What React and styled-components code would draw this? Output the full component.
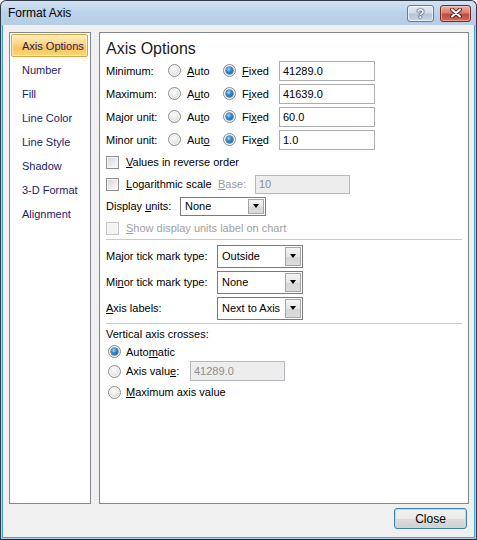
import styled, { createGlobalStyle } from "styled-components"

const GlobalStyle = createGlobalStyle`
  html, body {
    margin: 0;
    padding: 0;
    background: #ffffff;
  }
  * {
    box-sizing: border-box;
  }
`

const navItems = ["Axis Options", "Number", "Fill", "Line Color", "Line Style", "Shadow", "3-D Format", "Alignment"]

const bounds = [
  { label: "Minimum:", auto: ["", "A", "uto"], fixed: ["", "F", "ixed"], value: "41289.0" },
  { label: "Maximum:", auto: ["A", "u", "to"], fixed: ["F", "i", "xed"], value: "41639.0" },
  { label: "Major unit:", auto: ["Au", "t", "o"], fixed: ["Fi", "x", "ed"], value: "60.0" },
  { label: "Minor unit:", auto: ["Aut", "o", ""], fixed: ["Fix", "e", "d"], value: "1.0" },
]

// text with one underlined access key: [before, key, after]
function Key ({parts}) {
  return <>{parts[0]}<u>{parts[1]}</u>{parts[2]}</>
}

function CloseGlyph () {
  return (
    <svg width="12" height="10" viewBox="0 0 12 10">
      <path d="M2 1.5 L10 8.5 M10 1.5 L2 8.5" stroke="#5a1a12" strokeWidth="4" strokeLinecap="round" />
      <path d="M2 1.5 L10 8.5 M10 1.5 L2 8.5" stroke="#ffffff" strokeWidth="2.2" strokeLinecap="round" />
    </svg>
  )
}

function Combo ({value, top}) {
  return (
    <ComboBox $tall={top}>
      <ComboText>{value}</ComboText>
      <ComboButton><Arrow /></ComboButton>
    </ComboBox>
  )
}

export default function App () {
  return (
    <>
      <GlobalStyle />
      <Window>
        <TitleBar>
          <TitleText>Format Axis</TitleText>
          <CaptionButtons>
            <HelpButton>?</HelpButton>
            <CloseCaption><CloseGlyph /></CloseCaption>
          </CaptionButtons>
        </TitleBar>
        <Body>
          <Panels>
            <NavPanel>
              {navItems.map((item, i) => (
                <NavItem key={item} $active={i === 0}>{item}</NavItem>
              ))}
            </NavPanel>
            <OptionsPanel>
              <Heading>Axis Options</Heading>
              {bounds.map(b => (
                <BoundRow key={b.label}>
                  <Label>{b.label}</Label>
                  <Choice><Radio /><span><Key parts={b.auto} /></span></Choice>
                  <Choice><Radio $checked /><span><Key parts={b.fixed} /></span></Choice>
                  <TextBox>{b.value}</TextBox>
                </BoundRow>
              ))}
              <CheckRow>
                <Checkbox /><span><u>V</u>alues in reverse order</span>
              </CheckRow>
              <CheckRow>
                <Checkbox /><FixedText $width={85}><u>L</u>ogarithmic scale</FixedText>
                <BaseLabel><u>B</u>ase:</BaseLabel>
                <TextBox $disabled $width={95} $height={19}>10</TextBox>
              </CheckRow>
              <CheckRow>
                <FixedText $width={67}>Display <u>u</u>nits:</FixedText>
                <Combo value="None" />
              </CheckRow>
              <CheckRow $disabled>
                <Checkbox $disabled /><span><u>S</u>how display units label on chart</span>
              </CheckRow>
              <Separator />
              <TickRow>
                <TickLabel>Ma<u>j</u>or tick mark type:</TickLabel>
                <Combo value="Outside" top />
              </TickRow>
              <TickRow>
                <TickLabel>Mi<u>n</u>or tick mark type:</TickLabel>
                <Combo value="None" top />
              </TickRow>
              <TickRow>
                <TickLabel><u>A</u>xis labels:</TickLabel>
                <Combo value="Next to Axis" top />
              </TickRow>
              <Separator $gap={2} $after={2} />
              <CrossTitle>Vertical axis crosses:</CrossTitle>
              <CrossRow $height={17}>
                <Radio $checked /><span>Auto<u>m</u>atic</span>
              </CrossRow>
              <CrossRow $height={22}>
                <Radio /><FixedText $width={59}>Axis valu<u>e</u>:</FixedText>
                <TextBox $disabled $width={95} $height={20}>41289.0</TextBox>
              </CrossRow>
              <CrossRow $height={20}>
                <Radio /><span><u>M</u>aximum axis value</span>
              </CrossRow>
            </OptionsPanel>
          </Panels>
          <Footer>
            <DialogButton>Close</DialogButton>
          </Footer>
        </Body>
      </Window>
    </>
  )
}

const Window = styled.div`
  width: 477px;
  height: 540px;
  border: 1px solid #2e3b48;
  border-bottom-color: #1d2630;
  border-radius: 6px 6px 0 0;
  background: linear-gradient(#d3e2f3 0px, #bcd2ea 12px, #b6cde7 24px, #b9d0e9 540px);
  display: flex;
  flex-direction: column;
  padding: 0 1px 1px;
  font-family: "Liberation Sans", Arial, sans-serif;
  font-size: 11px;
  color: #000000;
  overflow: hidden;
`

const TitleBar = styled.div`
  height: 24px;
  display: flex;
  align-items: center;
  justify-content: space-between;
  padding: 0 4px 0 6px;
`

const TitleText = styled.div`
  font-size: 12px;
  color: #000000;
`

const CaptionButtons = styled.div`
  display: flex;
  gap: 6px;
  align-items: center;
`

const HelpButton = styled.div`
  width: 27px;
  height: 17px;
  border: 1px solid #6a7b90;
  border-radius: 3px;
  background: linear-gradient(#e4ecf6 0%, #cfdcec 45%, #b4c6dc 55%, #c6d6ea 100%);
  box-shadow: inset 0 0 0 1px rgba(255, 255, 255, 0.6);
  color: #ffffff;
  font-weight: bold;
  font-size: 13px;
  line-height: 15px;
  text-align: center;
  text-shadow: 0 0 1px #2c3a4c, 0 0 1px #2c3a4c, 0 0 2px #2c3a4c;
`

const CloseCaption = styled.div`
  width: 31px;
  height: 17px;
  border: 1px solid #6e2a22;
  border-radius: 3px;
  background: linear-gradient(#eab1a6 0%, #d97f71 45%, #c4493a 55%, #d26a58 100%);
  box-shadow: inset 0 0 0 1px rgba(255, 220, 210, 0.5);
  display: flex;
  align-items: center;
  justify-content: center;
`

const Body = styled.div`
  flex: 1;
  background: #f0f0f0;
  border: 1px solid #3aa5dc;
  border-top: none;
  padding: 7px 5px 0 6px;
  display: flex;
  flex-direction: column;
`

const Panels = styled.div`
  display: flex;
  gap: 8px;
  height: 472px;
`

const NavPanel = styled.div`
  width: 82px;
  background: #ffffff;
  border: 1px solid #828790;
  padding: 1px 2px 0 1px;
  display: flex;
  flex-direction: column;
`

const NavItem = styled.div`
  line-height: 22px;
  padding-left: 10px;
  color: #1c1c6c;
  white-space: nowrap;
  border: 1px solid ${p => p.$active ? "#d9a33e" : "transparent"};
  border-radius: 2px;
  background: ${p => p.$active
    ? "linear-gradient(#fff0c4 0%, #fedb8a 35%, #fcc55a 60%, #fbd67a 100%)"
    : "transparent"};
  box-shadow: ${p => p.$active ? "inset 0 0 0 1px rgba(255, 245, 210, 0.7)" : "none"};
  height: ${p => p.$active ? "23px" : "24px"};
  margin-bottom: ${p => p.$active ? "1px" : "0"};
`

const OptionsPanel = styled.div`
  width: 370px;
  background: #ffffff;
  border: 1px solid #828790;
  padding: 6px 6px 0 6px;
  display: flex;
  flex-direction: column;
`

const Heading = styled.div`
  font-size: 16px;
  line-height: 20px;
  height: 20px;
  color: #1a1a1a;
`

const BoundRow = styled.div`
  display: grid;
  grid-template-columns: 62px 55px 56px 96px;
  align-items: center;
  height: 23px;
`

const Label = styled.div`
  white-space: nowrap;
`

const Choice = styled.div`
  display: flex;
  align-items: center;
  gap: 6px;
`

const Radio = styled.span`
  flex: none;
  position: relative;
  width: 13px;
  height: 13px;
  border-radius: 50%;
  border: 1px solid #8a8c8e;
  background: radial-gradient(circle at 45% 40%, #fdfdfd 0%, #e9e9e9 45%, #cfcfcf 100%);
  box-shadow: inset 0 0 0 1px rgba(255, 255, 255, 0.8);

  &::after {
    content: "";
    display: ${p => p.$checked ? "block" : "none"};
    position: absolute;
    left: 2px;
    top: 2px;
    width: 7px;
    height: 7px;
    border-radius: 50%;
    background: radial-gradient(circle at 40% 35%, #a8def8 0%, #2f8bd3 40%, #0a4f92 100%);
    box-shadow: 0 0 0 0.5px #1b4f80;
  }
`

const TextBox = styled.div`
  flex: none;
  width: ${p => p.$width || 96}px;
  height: ${p => p.$height || 20}px;
  border: 1px solid ${p => p.$disabled ? "#b5b8bd" : "#abadb3"};
  background: ${p => p.$disabled ? "#ededed" : "#ffffff"};
  color: ${p => p.$disabled ? "#8d8d8d" : "#000000"};
  padding-left: 3px;
  display: flex;
  align-items: center;
`

const CheckRow = styled.div`
  display: flex;
  align-items: center;
  gap: 7px;
  height: 22px;
  color: ${p => p.$disabled ? "#a0a0a0" : "#000000"};
  white-space: nowrap;
`

const FixedText = styled.span`
  flex: none;
  width: ${p => p.$width}px;
  white-space: nowrap;
`

const Checkbox = styled.span`
  flex: none;
  width: 13px;
  height: 13px;
  border: 1px solid ${p => p.$disabled ? "#c4c4c4" : "#8e8f8f"};
  background: ${p => p.$disabled
    ? "#f4f4f4"
    : "linear-gradient(135deg, #cfd2d6 0%, #eeeeee 60%, #fafafa 100%)"};
  box-shadow: inset 0 0 0 1px #f6f6f6;
`

const BaseLabel = styled.span`
  flex: none;
  color: #9a9a9a;
  width: 30px;
`

const ComboBox = styled.div`
  width: 86px;
  height: ${p => p.$tall ? 23 : 19}px;
  border: 1px solid #7a7a7a;
  background: #ffffff;
  display: flex;
  align-items: stretch;
  padding: 1px;
`

const ComboText = styled.div`
  flex: 1;
  padding-left: 3px;
  display: flex;
  align-items: center;
  white-space: nowrap;
  overflow: hidden;
`

const ComboButton = styled.div`
  width: 16px;
  border: 1px solid #a5a5a5;
  background: linear-gradient(#f4f4f4 0%, #e6e6e6 50%, #d6d6d6 51%, #dcdcdc 100%);
  display: flex;
  align-items: center;
  justify-content: center;
`

const Arrow = styled.span`
  width: 0;
  height: 0;
  border-left: 3.5px solid transparent;
  border-right: 3.5px solid transparent;
  border-top: 4px solid #000000;
`

const Separator = styled.div`
  height: 1px;
  background: #c9c9c9;
  width: 356px;
  margin: ${p => p.$gap || 0}px 0 ${p => p.$after || 3}px;
`

const TickRow = styled.div`
  display: flex;
  align-items: center;
  height: 26px;
  white-space: nowrap;
`

const TickLabel = styled.span`
  width: 111px;
`

const CrossTitle = styled.div`
  height: 17px;
  line-height: 17px;
`

const CrossRow = styled.div`
  display: flex;
  align-items: center;
  gap: 5px;
  height: ${p => p.$height}px;
  padding-left: 2px;
  white-space: nowrap;
`

const Footer = styled.div`
  display: flex;
  justify-content: flex-end;
  padding: 4px 2px 0 0;
`

const DialogButton = styled.div`
  width: 73px;
  height: 21px;
  border: 1px solid #3c7fb1;
  border-radius: 3px;
  background: linear-gradient(#f2f2f2 0%, #ebebeb 50%, #dddddd 51%, #cfcfcf 100%);
  box-shadow: inset 0 0 0 1px #aee0f7;
  display: flex;
  align-items: center;
  justify-content: center;
  font-size: 12px;
  color: #000000;
`
